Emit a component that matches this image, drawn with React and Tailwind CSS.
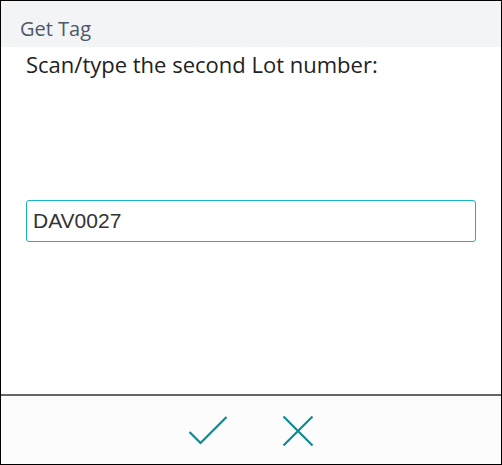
import React, { useState } from "react";

export default function App() {
  const [lot, setLot] = useState("DAV0027");

  return (
    <div className="w-[502px] h-[465px] border border-black bg-white flex flex-col font-['Open_Sans',sans-serif]">
      {/* Header */}
      <div className="h-[46px] bg-[#f3f4f6] flex items-end pl-[19px] pb-[8px] shrink-0">
        <span className="text-[20px] leading-none text-[#4f5966]">Get Tag</span>
      </div>

      {/* Body */}
      <div className="flex-1 flex flex-col px-[25px]">
        <p className="mt-[3px] text-[22px] leading-[28px] text-[#222]">
          Scan/type the second Lot number:
        </p>
        <input
          value={lot}
          onChange={(e) => setLot(e.target.value)}
          className="mt-[122px] h-[42px] w-full border border-[#16b4c0] rounded-[3px] px-[6px] text-[21px] text-[#333] font-['Liberation_Sans',sans-serif] outline-none"
        />
      </div>

      {/* Footer */}
      <div className="h-[70px] shrink-0 border-t-2 border-[#666] bg-[#fcfcfc] flex items-center justify-center gap-[54px] pt-[2px]">
        <button className="w-[40px] h-[32px] flex items-center justify-center">
          <svg width="40" height="30" viewBox="0 0 40 30" fill="none" stroke="#0f8a91" strokeWidth="2.2">
            <path d="M1.5 16 L12.5 27 L38.5 1" />
          </svg>
        </button>
        <button className="w-[32px] h-[32px] flex items-center justify-center">
          <svg width="32" height="32" viewBox="0 0 32 32" fill="none" stroke="#0f8a91" strokeWidth="2.2">
            <path d="M1.5 1.5 L30.5 30.5 M30.5 1.5 L1.5 30.5" />
          </svg>
        </button>
      </div>
    </div>
  );
}
